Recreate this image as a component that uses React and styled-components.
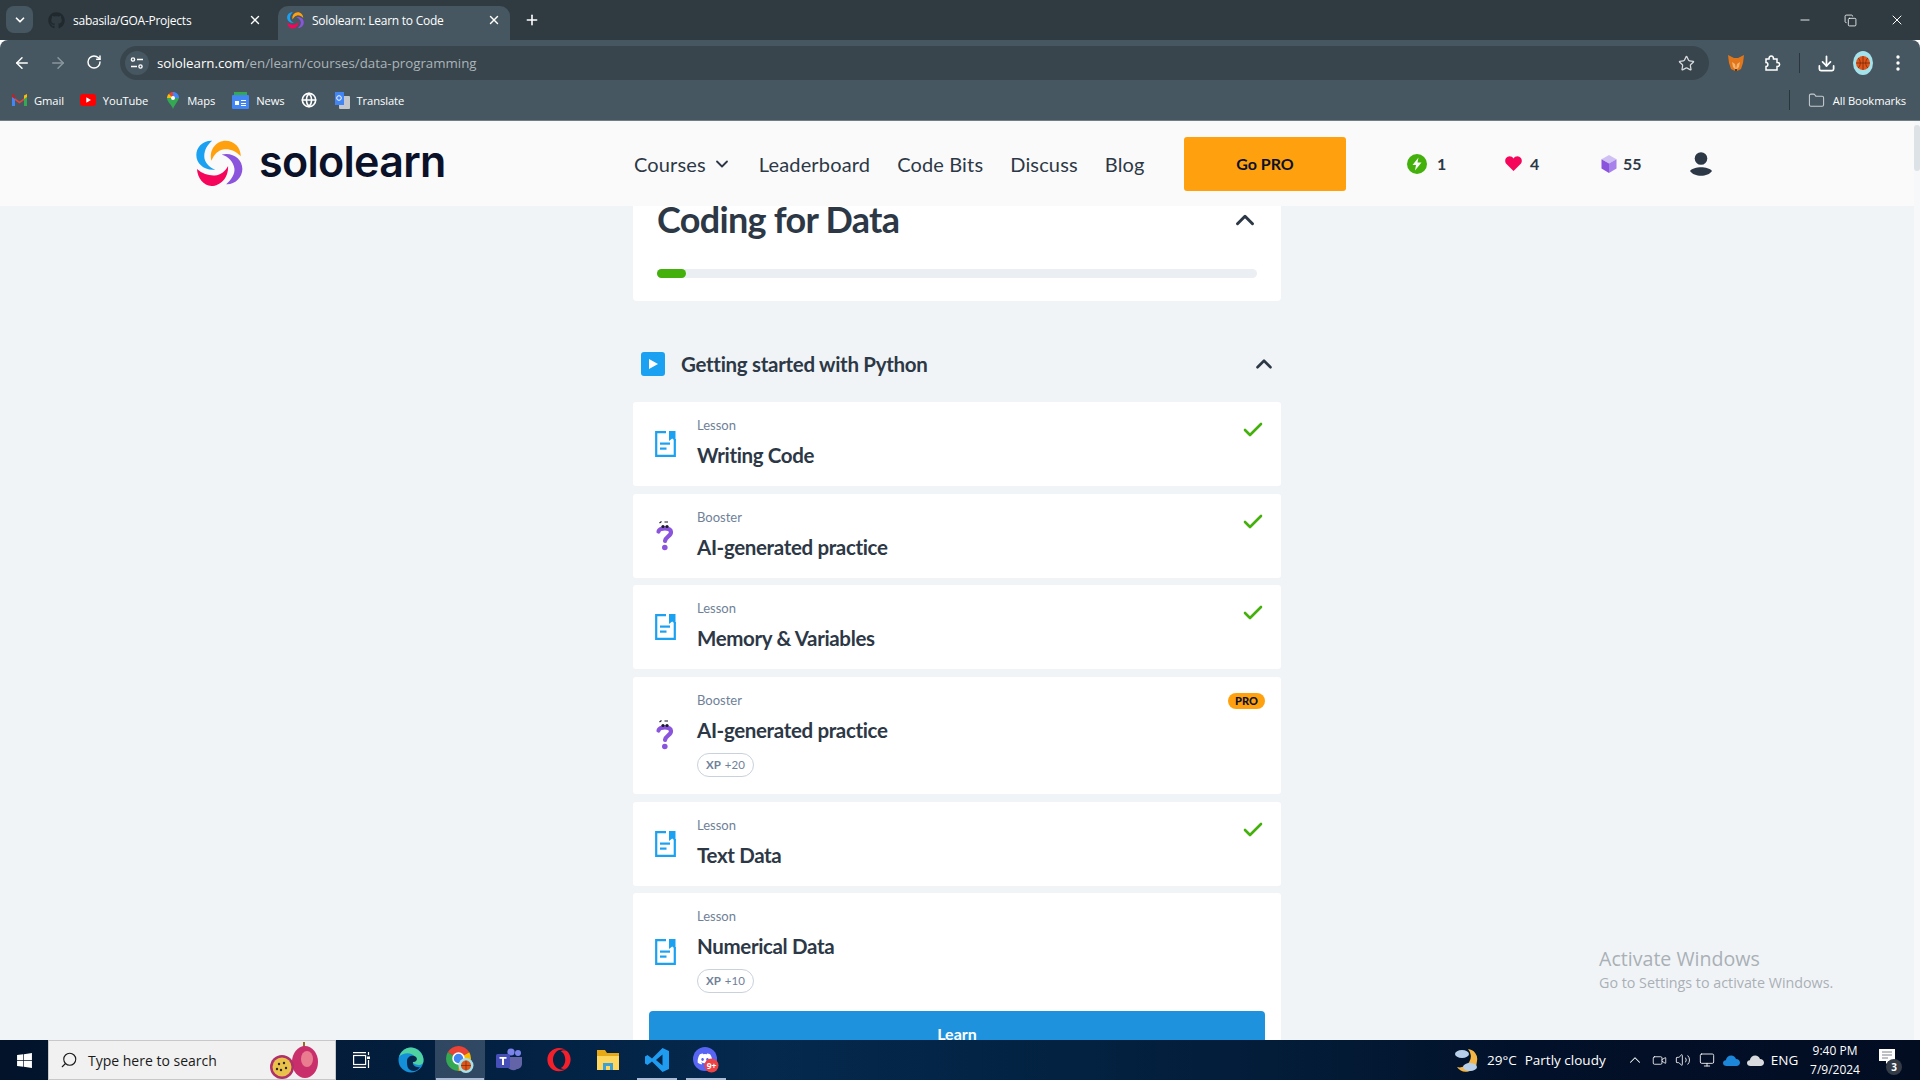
import React from 'react'
import styled, { createGlobalStyle } from 'styled-components'
import {
  ChevronDown, ChevronUp, X, Plus, ArrowLeft, ArrowRight, RotateCw, Star, Download, Folder,
  Check, Search, Minus, Copy, Globe, Volume2, Monitor, Video,
} from 'lucide-react'
import { FaGithub, FaWindows, FaOpera, FaDiscord } from 'react-icons/fa'

const Global = createGlobalStyle`
  html, body { margin: 0; padding: 0; height: 100%; overflow: hidden; }
  body { font-family: "Lato", "Noto Sans", sans-serif; }
  * { box-sizing: border-box; }
`

const Screen = styled.div`
  width: 1920px;
  height: 1080px;
  display: flex;
  flex-direction: column;
  overflow: hidden;
  position: relative;
`

/* browser chrome */
const TabStrip = styled.div`
  height: 40px;
  background: #2f3b41;
  display: flex;
  padding: 6px 0 0 6px;
  color: #fff;
  font-family: "Open Sans", sans-serif;
  font-size: 12px;
  letter-spacing: -0.25px;
`
const TabsMenu = styled.div`
  width: 27px;
  height: 27px;
  border-radius: 8px;
  background: #465761;
  display: flex;
  align-items: center;
  justify-content: center;
  margin-right: 6px;
`
const Tab = styled.div`
  width: ${p => p.$w}px;
  height: 34px;
  padding: 0 9px 6px 9px;
  margin-right: ${p => p.$mr || 0}px;
  border-radius: 10px 10px 0 0;
  background: ${p => (p.$active ? '#465761' : 'transparent')};
  display: flex;
  align-items: center;
  gap: 8px;
`
const TabTitle = styled.span`
  flex: 1;
  white-space: nowrap;
`
const NewTab = styled.div`
  height: 28px;
  margin-left: 14px;
  display: flex;
  align-items: center;
`
const WindowButtons = styled.div`
  margin-left: auto;
  display: flex;
  align-items: center;
  height: 28px;
  gap: 32px;
  padding-right: 15px;
`
const Chrome = styled.div`
  background: #465761;
  border-radius: 8px 8px 0 0;
  border-bottom: 1px solid #6f7f88;
  height: 81px;
  font-family: "Open Sans", sans-serif;
`
const Toolbar = styled.div`
  height: 40px;
  padding-top: 6px;
  display: flex;
  align-items: center;
  color: #fff;
`
const NavIcon = styled.div`
  width: 36px;
  display: flex;
  justify-content: center;
  color: ${p => (p.$dim ? '#8b979e' : '#fff')};
`
const BackGroup = styled.div`
  display: flex;
  flex: none;
  padding-left: 4px;
  width: 120px;
`
const Omnibox = styled.div`
  width: 1589px;
  flex: none;
  height: 34px;
  border-radius: 17px;
  background: #39454c;
  display: flex;
  align-items: center;
  padding: 0 14px 0 5px;
`
const SiteBadge = styled.div`
  width: 24px;
  height: 24px;
  border-radius: 50%;
  background: #465761;
  margin-right: 8px;
  display: flex;
  align-items: center;
  justify-content: center;
`
const Url = styled.span`
  font-size: 13.3px;
  color: #fff;
  flex: 1;
  & em { font-style: normal; color: #aab4ba; }
`
const ToolIcons = styled.div`
  display: flex;
  flex: none;
  align-items: center;
  margin-left: 18px;
`
const ToolSlot = styled.div`
  width: ${p => p.$w}px;
  margin-left: ${p => p.$ml || 0}px;
  display: flex;
  justify-content: center;
  align-items: center;
`
const Divider = styled.div`
  width: 1px;
  height: 20px;
  background: #2b363c;
`
const Bookmarks = styled.div`
  height: 40px;
  display: flex;
  align-items: center;
  padding-left: 12px;
  color: #fff;
  font-size: 11.2px;
  letter-spacing: -0.1px;
`
const Bookmark = styled.div`
  display: flex;
  align-items: center;
  gap: 7px;
  margin-right: ${p => p.$mr}px;
  white-space: nowrap;
`
const BookmarksEnd = styled.div`
  margin-left: auto;
  display: flex;
  align-items: center;
  padding-right: 14px;
  gap: 8px;
`

/* page */
const Viewport = styled.div`
  flex: 1;
  display: flex;
  min-height: 0;
  background: #f1f4f7;
`
const Page = styled.div`
  flex: 1;
  display: flex;
  flex-direction: column;
  min-width: 0;
  position: relative;
  overflow: hidden;
`
const Scrollbar = styled.div`
  width: 6px;
  background: #f7f8f9;
  padding-top: 4px;
`
const Thumb = styled.div`
  height: 46px;
  border-radius: 3px;
  background: #dde2e6;
`
const Header = styled.header`
  height: 85px;
  flex: none;
  background: #fafafa;
  display: flex;
  align-items: center;
  padding-left: 196px;
  color: #2d3846;
  font-family: "Lato", sans-serif;
`
const Brand = styled.div`
  width: 438px;
  display: flex;
  align-items: center;
  gap: 16px;
`
const Wordmark = styled.span`
  font-family: "Inter", sans-serif;
  font-size: 43px;
  font-weight: 600;
  letter-spacing: -0.7px;
  color: #0a1128;
  line-height: 1;
  margin-top: -5px;
`
const Nav = styled.nav`
  width: 550px;
  display: flex;
  align-items: center;
  gap: 27px;
`
const NavLink = styled.a`
  font-size: 20px;
  letter-spacing: 0.15px;
  display: flex;
  align-items: center;
  gap: 6px;
`
const ProButton = styled.button`
  width: 162px;
  height: 54px;
  border: 0;
  border-radius: 3px;
  background: #ffa10f;
  color: #0a1128;
  font-family: inherit;
  font-size: 16px;
  font-weight: 700;
`
const Stat = styled.div`
  width: ${p => p.$w}px;
  margin-left: ${p => p.$ml || 0}px;
  display: flex;
  align-items: center;
  gap: ${p => p.$gap}px;
  font-size: 16px;
  font-weight: 700;
`
const Main = styled.main`
  flex: 1;
  min-height: 0;
  overflow: hidden;
  width: 648px;
  margin: 0 auto;
  display: flex;
  flex-direction: column;
`
const CourseCard = styled.section`
  height: 95px;
  flex: none;
  background: #fff;
  border-radius: 0 0 4px 4px;
  padding: 0 24px;
`
const CourseTop = styled.div`
  height: 63px;
  padding-bottom: 36px;
  display: flex;
  align-items: center;
  justify-content: space-between;
  margin-right: -3px;
  color: #2d3846;
`
const CourseTitle = styled.h1`
  margin: 0;
  font-size: 36px;
  line-height: 27px;
  font-weight: 700;
  letter-spacing: -0.7px;
  white-space: nowrap;
`
const UpIcon = styled.span`
  display: flex;
`
const Progress = styled.div`
  height: 9px;
  border-radius: 5px;
  background: #ebeff3;
`
const ProgressFill = styled.div`
  height: 100%;
  border-radius: 5px;
  background: #43b00c;
`
const SectionHead = styled.div`
  height: 101px;
  flex: none;
  display: flex;
  align-items: center;
  padding: 24px 4px 0 8px;
  gap: 16px;
  color: #2d3846;
`
const PlayBadge = styled.div`
  width: 24px;
  height: 24px;
  border-radius: 3px;
  background: #1ba1f2;
  display: flex;
  align-items: center;
  justify-content: center;
`
const SectionTitle = styled.h2`
  flex: 1;
  margin: 0;
  font-size: 20.5px;
  font-weight: 700;
  letter-spacing: -0.3px;
`
const Rows = styled.div`
  display: flex;
  flex-direction: column;
  gap: 7.6px;
`
const Row = styled.div`
  height: ${p => p.$h}px;
  flex: none;
  background: #fff;
  border-radius: 3px;
  display: flex;
  position: relative;
  padding-left: 22px;
`
const RowIcon = styled.div`
  width: 42px;
  height: ${p => p.$h}px;
  flex: none;
  display: flex;
  align-items: center;
`
const RowBody = styled.div`
  padding-top: 14px;
  display: flex;
  flex-direction: column;
`
const RowLabel = styled.span`
  font-size: 13px;
  line-height: 18px;
  color: #6f8199;
`
const RowTitle = styled.span`
  margin-top: 8px;
  font-size: 20.5px;
  line-height: 26px;
  font-weight: 700;
  letter-spacing: -0.35px;
  color: #2d3846;
`
const XpPill = styled.span`
  align-self: flex-start;
  margin-top: 10px;
  height: 24px;
  padding: 0 8px;
  border: 1px solid #c9d2dc;
  border-radius: 12px;
  font-size: 11.5px;
  line-height: 22px;
  color: #6f8199;
  & b { margin-right: 4px; }
`
const DoneMark = styled.span`
  position: absolute;
  top: 16px;
  right: 16px;
  display: flex;
  color: #43b00c;
`
const ProBadge = styled.span`
  position: absolute;
  top: 16px;
  right: 16px;
  width: 37px;
  height: 16px;
  border-radius: 8px;
  background: #ffa10f;
  color: #0a1128;
  font-size: 11px;
  line-height: 16px;
  font-weight: 900;
  text-align: center;
`
const LearnButton = styled.button`
  position: absolute;
  left: 649px;
  bottom: -19px;
  width: 616px;
  height: 48px;
  border: 0;
  border-radius: 4px 4px 0 0;
  background: #1f92de;
  color: #fff;
  font-family: inherit;
  font-size: 16px;
  font-weight: 700;
  padding: 0 0 4px;
`
const Watermark = styled.div`
  position: absolute;
  left: 1599px;
  top: 824px;
  font-family: "Open Sans", sans-serif;
  color: #a9b0b6;
  font-size: 14.3px;
  line-height: 20px;
  & strong { display: block; font-weight: 400; font-size: 19.6px; line-height: 28px; }
`

/* taskbar */
const Taskbar = styled.footer`
  height: 40px;
  flex: none;
  display: flex;
  align-items: center;
  color: #fff;
  font-family: "Open Sans", sans-serif;
  font-size: 13.5px;
  background: linear-gradient(90deg, #02132a 0%, #032244 28%, #04294d 40%, #032242 55%, #031a35 70%, #021029 80%, #020d22 100%);
`
const StartSlot = styled.div`
  width: 48px;
  display: flex;
  justify-content: center;
`
const SearchBox = styled.div`
  width: 288px;
  height: 40px;
  background: #f1f1f1;
  border: 1px solid #c8c8c8;
  color: #1a1a1a;
  display: flex;
  align-items: center;
  padding-left: 11px;
  gap: 10px;
  font-size: 14px;
  position: relative;
`
const Doodle = styled.svg`
  position: absolute;
  left: 221px;
  top: 1px;
`
const Apps = styled.div`
  display: flex;
  height: 100%;
`
const AppSlot = styled.div`
  width: ${p => p.$w || 49.3}px;
  height: 100%;
  display: flex;
  align-items: center;
  justify-content: center;
  position: relative;
  background: ${p => (p.$active ? 'rgba(255,255,255,.18)' : 'transparent')};
  &::after {
    content: '';
    display: ${p => (p.$run ? 'block' : 'none')};
    position: absolute;
    bottom: 0;
    left: 50%;
    transform: translateX(-50%);
    width: ${p => p.$run}px;
    height: 2px;
    background: #a9bbd6;
  }
`
const Tray = styled.div`
  margin-left: auto;
  display: flex;
  align-items: center;
  height: 100%;
  font-size: 13.5px;
`
const TraySlot = styled.div`
  width: ${p => p.$w}px;
  display: flex;
  align-items: center;
  justify-content: center;
`
const Weather = styled.div`
  display: flex;
  align-items: center;
  gap: 9px;
  width: 169px;
  & span + span { margin-left: -1px; }
`
const Clock = styled.div`
  width: 66px;
  text-align: center;
  font-size: 12px;
  line-height: 19px;
  white-space: nowrap;
`
const Notify = styled.div`
  width: 52px;
  height: 100%;
  padding-left: 11px;
  display: flex;
  align-items: center;
  position: relative;
`
const NotifyBadge = styled.span`
  position: absolute;
  left: 18px;
  top: 19px;
  width: 16px;
  height: 16px;
  border-radius: 50%;
  background: #333c47;
  font-size: 10px;
  font-weight: 700;
  line-height: 16px;
  text-align: center;
`

function Logo({ size = 47 }) {
  return (
    <svg width={size} height={size} viewBox="19 32 148 145">
      <path fill="#1ba1f2" d="M70 33C38 32 20 55 20 78C20 105 45 128 80 124C60 118 45 100 45 82C45 62 55 45 70 33Z" />
      <path fill="#ffa10f" d="M68 96C58 60 85 33 112 33C140 33 160 55 160 82C145 65 125 58 108 60C88 62 75 78 68 96Z" />
      <path fill="#8a54dc" d="M100 76C135 68 165 90 165 122C165 150 140 172 114 170C130 155 142 138 140 120C138 100 120 82 100 76Z" />
      <path fill="#f5065a" d="M120 112C122 150 95 175 68 175C42 175 24 150 22 122C40 138 60 143 78 142C98 140 112 128 120 112Z" />
    </svg>
  )
}

function LessonIcon() {
  return (
    <svg width="21" height="26" viewBox="0 0 21 26">
      <path d="M11 1.2H1.2V24.8H19.8V8" fill="none" stroke="#1ba1f2" strokeWidth="2.2" />
      <path d="M14 0H20.5V10L17.2 7.4L14 10Z" fill="#1ba1f2" />
      <rect x="5" y="11.5" width="10" height="2.2" fill="#1ba1f2" />
      <rect x="5" y="16.500" width="6.500" height="2.2" fill="#1ba1f2" />
    </svg>
  )
}

function BoosterIcon() {
  return (
    <svg width="20" height="32" viewBox="0 0 20 32">
      <path d="M3.5 11.5C4.5 7.5 15.5 7 16 12C16.4 16 10.5 16.5 10 21" fill="none" stroke="#8a54dc" strokeWidth="4.2" strokeLinecap="round" />
      <circle cx="9.8" cy="27.5" r="2.8" fill="#8a54dc" />
      <circle cx="8" cy="6.5" r="1.6" fill="#1a1a2a" />
      <circle cx="12" cy="6.5" r="1.6" fill="#1a1a2a" />
      <path d="M4.5 3L6.5 1.5M9.5 2H13" stroke="#1a1a2a" strokeWidth="1.1" />
    </svg>
  )
}

function Fox() {
  return (
    <svg width="18" height="18" viewBox="0 0 18 18">
      <path fill="#e2761b" d="M1 1L7 4H11L17 1L16 9L14 15L10 17H8L4 15L2 9Z" />
      <path fill="#f6b26b" d="M5 8L8 10L9 15L10 10L13 8L12 13L9 16L6 13Z" />
      <path fill="#5c3a1e" d="M8 15H10V17H8Z" />
    </svg>
  )
}

function Puzzle() {
  return (
    <svg width="18" height="18" viewBox="0 0 18 18" fill="none" stroke="#fff" strokeWidth="1.5">
      <path d="M3 5H6C6 1 10.5 1 10.5 5H14V8.5C17.5 8.5 17.5 12.5 14 12.5V16H3V12.5C5.5 12.5 5.5 8.5 3 8.5Z" />
    </svg>
  )
}

function Avatar() {
  return (
    <svg width="20" height="24" viewBox="0 0 20 24">
      <ellipse cx="10" cy="12" rx="10" ry="12" fill="#a4e3ec" />
      <circle cx="10" cy="12" r="7" fill="#e0561a" />
      <path d="M3 12H17M10 5V19M5 7C8 9 8 15 5 17M15 7C12 9 12 15 15 17" stroke="#7a2a08" strokeWidth="0.8" fill="none" />
    </svg>
  )
}

function GmailIcon() {
  return (
    <svg width="15" height="12" viewBox="0 0 15 12">
      <path fill="#ea4335" d="M0 2L7.5 7.5L15 2V4L7.5 9.5L0 4Z" />
      <rect x="0" y="2" width="3" height="10" fill="#4285f4" />
      <rect x="12" y="2" width="3" height="10" fill="#34a853" />
      <path fill="#fbbc05" d="M12 1.5L15 0V3L12 5Z" />
      <path fill="#c5221f" d="M0 0L3 1.5V5L0 3Z" />
    </svg>
  )
}

function YoutubeIcon() {
  return (
    <svg width="16" height="12" viewBox="0 0 16 12">
      <rect width="16" height="12" rx="3" fill="#f00" />
      <path d="M6.3 3.3L11 6L6.3 8.7Z" fill="#fff" />
    </svg>
  )
}

function MapsIcon() {
  return (
    <svg width="14" height="17" viewBox="-1 0 14 17">
      <path fill="#34a853" d="M6 17C5 13 0 10 0 6L6 6L12 6C11 10 7 13 6 17Z" />
      <path fill="#fbbc05" d="M0 6C0 4 1 2.5 2 1.7L6 6Z" />
      <path fill="#4285f4" d="M6 0C9.5 0 12 2.5 12 6H6Z" />
      <path fill="#ea4335" d="M2 1.7C3 .6 4.5 0 6 0V6Z" />
      <circle cx="6" cy="6" r="2" fill="#fff" />
    </svg>
  )
}

function NewsIcon() {
  return (
    <svg width="17" height="17" viewBox="0 0 17 17">
      <rect x="2" y="0" width="13" height="5" fill="#34a853" />
      <rect x="0" y="3" width="17" height="14" rx="1" fill="#4285f4" />
      <path d="M3 9H7V13H3ZM9 8H14V9H9ZM9 11H14V12H9ZM9 13H14V14H9Z" fill="#fff" />
    </svg>
  )
}

function TranslateIcon() {
  return (
    <svg width="16" height="17" viewBox="0 0 16 17">
      <rect x="5" y="4" width="11" height="13" rx="1" fill="#c4c8cc" />
      <path d="M1 0H10V13H1Z" fill="#4285f4" />
      <circle cx="5" cy="6" r="2.3" fill="none" stroke="#fff" strokeWidth="1" />
    </svg>
  )
}

function TuneIcon() {
  return (
    <svg width="14" height="14" viewBox="0 0 14 14" fill="none" stroke="#fff" strokeWidth="1.4">
      <circle cx="3" cy="3.5" r="1.6" />
      <path d="M7 3.5H13M1 10.5H7" />
      <circle cx="10.5" cy="10.5" r="1.6" />
    </svg>
  )
}

function Bolt() {
  return (
    <svg width="20" height="20" viewBox="0 0 20 20">
      <circle cx="10" cy="10" r="10" fill="#43b00c" />
      <path d="M11.5 3.5L5.5 11H9L8 16.5L14.5 8.5H10.5Z" fill="#fafafa" />
    </svg>
  )
}

function Heart() {
  return (
    <svg width="17" height="15" viewBox="0 0 17 15">
      <path fill="#f5065a" d="M8.5 15L1 7.5C-1 4.5.8.2 4.5.2C6.2.2 7.6 1 8.5 2.5C9.4 1 10.8.2 12.5.2C16.2.2 18 4.5 16 7.5Z" />
    </svg>
  )
}

function Cube() {
  return (
    <svg width="16" height="18" viewBox="0 0 16 18">
      <path fill="#cfc0f3" d="M8 0L15.5 4.2L8 8.5L.5 4.2Z" />
      <path fill="#a682ea" d="M8 8.5L15.5 4.2V13.5L8 18Z" />
      <path fill="#8a54dc" d="M8 8.5L.5 4.2V13.5L8 18Z" />
    </svg>
  )
}

function UserIcon() {
  return (
    <svg width="22" height="24" viewBox="0 0 22 24" fill="#2d3846">
      <circle cx="11" cy="6.500" r="6.300" />
      <path d="M0 19C4 14 18 14 22 19C18 25.300 4 25.300 0 19Z" />
    </svg>
  )
}

function PassionFruit() {
  return (
    <Doodle width="52" height="38" viewBox="0 0 52 38">
      <rect x="33" y="0" width="2" height="6" fill="#9a6a2a" />
      <ellipse cx="35" cy="20" rx="13" ry="16" fill="#c92f6b" />
      <ellipse cx="37" cy="17" rx="6" ry="8" fill="#ea7c8f" />
      <circle cx="12" cy="25" r="12" fill="#b0306a" />
      <circle cx="12" cy="25" r="9.5" fill="#e8c24a" />
      <circle cx="9" cy="22" r="1.2" fill="#34241a" />
      <circle cx="14" cy="21" r="1.2" fill="#34241a" />
      <circle cx="16" cy="26" r="1.2" fill="#34241a" />
      <circle cx="11" cy="28" r="1.2" fill="#34241a" />
      <circle cx="7" cy="27" r="1.2" fill="#34241a" />
    </Doodle>
  )
}

function TaskView() {
  return (
    <svg width="17" height="16" viewBox="0 0 17 16" fill="none" stroke="#fff" strokeWidth="1.2">
      <path d="M0 .6H13M0 15.400H13" />
      <rect x=".6" y="3.500" width="12" height="9" />
      <path d="M15.500 0V3M15.500 8V16" />
      <rect x="14" y="4.500" width="3" height="2.500" fill="#fff" stroke="none" />
    </svg>
  )
}

function EdgeIcon() {
  return (
    <svg width="26" height="26" viewBox="0 0 26 26">
      <circle cx="13" cy="13" r="12.500" fill="#1490d8" />
      <path d="M25.500 14C26 8 21 1 13 .5C7 .5 2.500 5 1 10C5 5 14 5 17 10C18 13 17 15 14 15C18 19 25.500 19 25.500 14Z" fill="#4fd1a0" />
      <path d="M9 14C9 10 13 8 16 9C20 10 20 15 15 15C14 18 18 21 22 20C19 25 13 25 10 21C9 19 9 16 9 14Z" fill="#03264a" />
    </svg>
  )
}

function ChromeIcon() {
  return (
    <svg width="32" height="32" viewBox="0 0 32 32">
      <path d="M14.500 14.500L3.700 8.250A12.500 12.500 0 0 1 25.300 8.250Z" fill="#ea4335" />
      <path d="M14.500 14.500L3.700 8.250A12.500 12.500 0 0 0 14.500 27Z" fill="#34a853" />
      <path d="M14.500 14.500L25.300 8.250A12.500 12.500 0 0 1 14.500 27Z" fill="#fbbc05" />
      <circle cx="14.500" cy="14.500" r="5.500" fill="#4285f4" stroke="#fff" strokeWidth="1.500" />
      <circle cx="22" cy="21.500" r="7.500" fill="#a4e3ec" />
      <circle cx="22" cy="21.500" r="5" fill="#e0561a" />
      <path d="M17 21.500H27M22 16.500V26.500" stroke="#7a2a08" strokeWidth=".7" />
    </svg>
  )
}

function TeamsIcon() {
  return (
    <svg width="26" height="24" viewBox="0 0 26 24">
      <circle cx="22" cy="5" r="3" fill="#7b83eb" />
      <circle cx="15" cy="4" r="3.600" fill="#7b83eb" />
      <path d="M10 9H26V16C26 19 23 21 21 21C17 24 12 21 10 17Z" fill="#6264a7" />
      <rect x="0" y="6" width="14" height="14" rx="1.500" fill="#464eb8" />
      <path d="M3.500 9H10.500V10.700H8V17H6V10.700H3.500Z" fill="#fff" />
    </svg>
  )
}

function ExplorerIcon() {
  return (
    <svg width="22" height="22" viewBox="0 0 22 22">
      <path d="M0 1H8L10 4H22V21H0Z" fill="#e8a917" />
      <rect x="0" y="7" width="22" height="14" fill="#ffd75e" />
      <rect x="6" y="14" width="10" height="7" fill="#3aa0d8" />
      <rect x="9" y="17" width="4" height="4" fill="#ffd75e" />
    </svg>
  )
}

function VsCodeIcon() {
  return (
    <svg width="24" height="24" viewBox="0 0 24 24">
      <path fill="#1f9cf0" d="M17.500 0L24 3V21L17.500 24L7 13.500L2.500 17L0 15.500V8.500L2.500 7L7 10.500ZM17.500 6.500L11 12L17.500 17.500Z" />
    </svg>
  )
}

function DiscordBadge() {
  return (
    <svg width="26" height="26" viewBox="0 0 26 26">
      <circle cx="12" cy="12" r="12" fill="#5865f2" />
      <foreignObject x="4" y="4" width="16" height="16">
        <FaDiscord size={16} color="#fff" />
      </foreignObject>
      <circle cx="18.500" cy="18.500" r="7" fill="#ed4245" />
      <text x="18.500" y="21.500" textAnchor="middle" fontSize="8.500" fontWeight="700" fill="#fff">9+</text>
    </svg>
  )
}

function CloudSun() {
  return (
    <svg width="24" height="24" viewBox="0 0 24 24">
      <path d="M14 1A11 11 0 0 1 3 19A11 11 0 0 0 23 13A10 10 0 0 0 14 1Z" fill="#f5b544" />
      <ellipse cx="8" cy="6" rx="7" ry="4" fill="#b7cfe8" />
      <ellipse cx="16" cy="19" rx="7" ry="4" fill="#b7cfe8" />
    </svg>
  )
}

function OneDrive({ color }) {
  return (
    <svg width="17" height="11" viewBox="0 0 17 11">
      <path fill={color} d="M3.500 11C1.500 11 0 9.800 0 8C0 6.300 1.200 5.300 2.800 5.200C3.400 2.300 5.500.5 8.200.5C10.500.5 12.300 1.800 13 4C15.300 4.100 17 5.500 17 7.600C17 9.600 15.500 11 13.500 11Z" />
    </svg>
  )
}

function NotifyIcon() {
  return (
    <svg width="16" height="15" viewBox="0 0 16 15" style={{ marginTop: -8 }}>
      <path d="M0 0H16V12H10L7 15V12H0Z" fill="#fff" />
      <path d="M3 3H13M3 6H13M3 9H9" stroke="#5a6470" strokeWidth=".8" />
    </svg>
  )
}

const lessons = [
  { kind: 'Lesson', title: 'Writing Code', done: true },
  { kind: 'Booster', title: 'AI-generated practice', done: true },
  { kind: 'Lesson', title: 'Memory & Variables', done: true },
  { kind: 'Booster', title: 'AI-generated practice', pro: true, xp: 20 },
  { kind: 'Lesson', title: 'Text Data', done: true },
  { kind: 'Lesson', title: 'Numerical Data', xp: 10, extra: 40 },
]

function LessonRow({ item }) {
  const h = item.xp ? 117.4 : 84
  return (
    <Row $h={h + (item.extra || 0)}>
      <RowIcon $h={h}>{item.kind === 'Lesson' ? <LessonIcon /> : <BoosterIcon />}</RowIcon>
      <RowBody>
        <RowLabel>{item.kind}</RowLabel>
        <RowTitle>{item.title}</RowTitle>
        {item.xp && <XpPill><b>XP</b>+{item.xp}</XpPill>}
      </RowBody>
      {item.done && <DoneMark><Check size={24} strokeWidth={2.6} /></DoneMark>}
      {item.pro && <ProBadge>PRO</ProBadge>}
    </Row>
  )
}

export default function App() {
  return (
    <Screen>
      <Global />
      <TabStrip>
        <TabsMenu><ChevronDown size={14} strokeWidth={3} /></TabsMenu>
        <Tab $w={232} $mr={7}>
          <FaGithub size={17} color="#20292e" />
          <TabTitle>sabasila/GOA-Projects</TabTitle>
          <X size={14} strokeWidth={2.4} />
        </Tab>
        <Tab $w={232} $active>
          <Logo size={17} />
          <TabTitle>Sololearn: Learn to Code</TabTitle>
          <X size={14} strokeWidth={2.4} />
        </Tab>
        <NewTab><Plus size={16} strokeWidth={2.4} /></NewTab>
        <WindowButtons>
          <Minus size={14} strokeWidth={1.5} />
          <Copy size={13} strokeWidth={1.5} />
          <X size={16} strokeWidth={1.5} />
        </WindowButtons>
      </TabStrip>
      <Chrome>
        <Toolbar>
          <BackGroup>
            <NavIcon><ArrowLeft size={18} strokeWidth={2} /></NavIcon>
            <NavIcon $dim><ArrowRight size={18} strokeWidth={2} /></NavIcon>
            <NavIcon><RotateCw size={16} strokeWidth={2.2} /></NavIcon>
          </BackGroup>
          <Omnibox>
            <SiteBadge><TuneIcon /></SiteBadge>
            <Url>sololearn.com<em>/en/learn/courses/data-programming</em></Url>
            <Star size={17} color="#d5dadd" strokeWidth={1.8} />
          </Omnibox>
          <ToolIcons>
            <ToolSlot $w={18}><Fox /></ToolSlot>
            <ToolSlot $w={54}><Puzzle /></ToolSlot>
            <Divider />
            <ToolSlot $w={53}><Download size={19} strokeWidth={2.2} /></ToolSlot>
            <ToolSlot $w={20}><Avatar /></ToolSlot>
            <ToolSlot $w={44} $ml={3}>
              <svg width="4" height="16" viewBox="0 0 4 16" fill="#fff"><circle cx="2" cy="2" r="1.7" /><circle cx="2" cy="8" r="1.7" /><circle cx="2" cy="14" r="1.7" /></svg>
            </ToolSlot>
          </ToolIcons>
        </Toolbar>
        <Bookmarks>
          <Bookmark $mr={16}><GmailIcon />Gmail</Bookmark>
          <Bookmark $mr={18}><YoutubeIcon />YouTube</Bookmark>
          <Bookmark $mr={17}><MapsIcon />Maps</Bookmark>
          <Bookmark $mr={16}><NewsIcon />News</Bookmark>
          <Bookmark $mr={17}><Globe size={16} color="#fff" strokeWidth={2.4} /></Bookmark>
          <Bookmark $mr={0}><TranslateIcon />Translate</Bookmark>
          <BookmarksEnd>
            <Divider />
            <Folder size={17} color="#c5cbcf" strokeWidth={1.5} style={{ marginLeft: 10 }} />
            All Bookmarks
          </BookmarksEnd>
        </Bookmarks>
      </Chrome>

      <Viewport>
        <Page>
          <Header>
            <Brand>
              <Logo />
              <Wordmark>sololearn</Wordmark>
            </Brand>
            <Nav>
              <NavLink>Courses <ChevronDown size={20} strokeWidth={2.2} /></NavLink>
              <NavLink>Leaderboard</NavLink>
              <NavLink>Code Bits</NavLink>
              <NavLink>Discuss</NavLink>
              <NavLink>Blog</NavLink>
            </Nav>
            <ProButton>Go PRO</ProButton>
            <Stat $w={98} $ml={61} $gap={10}><Bolt />1</Stat>
            <Stat $w={96} $gap={8}><Heart />4</Stat>
            <Stat $w={89} $gap={6}><Cube />55</Stat>
            <UserIcon />
          </Header>
          <Main>
            <CourseCard>
              <CourseTop>
                <CourseTitle>Coding for Data</CourseTitle>
                <UpIcon><ChevronUp size={30} strokeWidth={2.4} /></UpIcon>
              </CourseTop>
              <Progress><ProgressFill style={{ width: `${(29 / 600) * 100}%` }} /></Progress>
            </CourseCard>
            <SectionHead>
              <PlayBadge>
                <svg width="10" height="10" viewBox="0 0 10 10"><path d="M1 0L10 5L1 10Z" fill="#fff" /></svg>
              </PlayBadge>
              <SectionTitle>Getting started with Python</SectionTitle>
              <ChevronUp size={26} strokeWidth={2.4} />
            </SectionHead>
            <Rows>
              {lessons.map((item, i) => <LessonRow key={i} item={item} />)}
            </Rows>
          </Main>
          <LearnButton>Learn</LearnButton>
          <Watermark>
            <strong>Activate Windows</strong>
            Go to Settings to activate Windows.
          </Watermark>
        </Page>
        <Scrollbar><Thumb /></Scrollbar>
      </Viewport>

      <Taskbar>
        <StartSlot><FaWindows size={17} /></StartSlot>
        <SearchBox>
          <Search size={18} strokeWidth={1.5} style={{ transform: 'scaleX(-1)' }} />
          Type here to search
          <PassionFruit />
        </SearchBox>
        <Apps>
          <AppSlot $w={50}><TaskView /></AppSlot>
          <AppSlot><EdgeIcon /></AppSlot>
          <AppSlot $active $run={48}><ChromeIcon /></AppSlot>
          <AppSlot><TeamsIcon /></AppSlot>
          <AppSlot><FaOpera size={24} color="#f3202c" /></AppSlot>
          <AppSlot><ExplorerIcon /></AppSlot>
          <AppSlot $run={40}><VsCodeIcon /></AppSlot>
          <AppSlot $run={40}><DiscordBadge /></AppSlot>
        </Apps>
        <Tray>
          <Weather>
            <CloudSun />
            <span>29°C</span>
            <span>Partly cloudy</span>
          </Weather>
          <TraySlot $w={24}><ChevronUp size={18} strokeWidth={1.4} /></TraySlot>
          <TraySlot $w={24}><Video size={15} strokeWidth={1.3} /></TraySlot>
          <TraySlot $w={24}><Volume2 size={16} strokeWidth={1.3} /></TraySlot>
          <TraySlot $w={24}><Monitor size={16} strokeWidth={1.3} /></TraySlot>
          <TraySlot $w={24}><OneDrive color="#1c87d8" /></TraySlot>
          <TraySlot $w={24}><OneDrive color="#d8dadd" /></TraySlot>
          <TraySlot $w={35}>ENG</TraySlot>
          <Clock>9:40 PM<br />7/9/2024</Clock>
          <Notify>
            <NotifyIcon />
            <NotifyBadge>3</NotifyBadge>
          </Notify>
        </Tray>
      </Taskbar>
    </Screen>
  )
}
